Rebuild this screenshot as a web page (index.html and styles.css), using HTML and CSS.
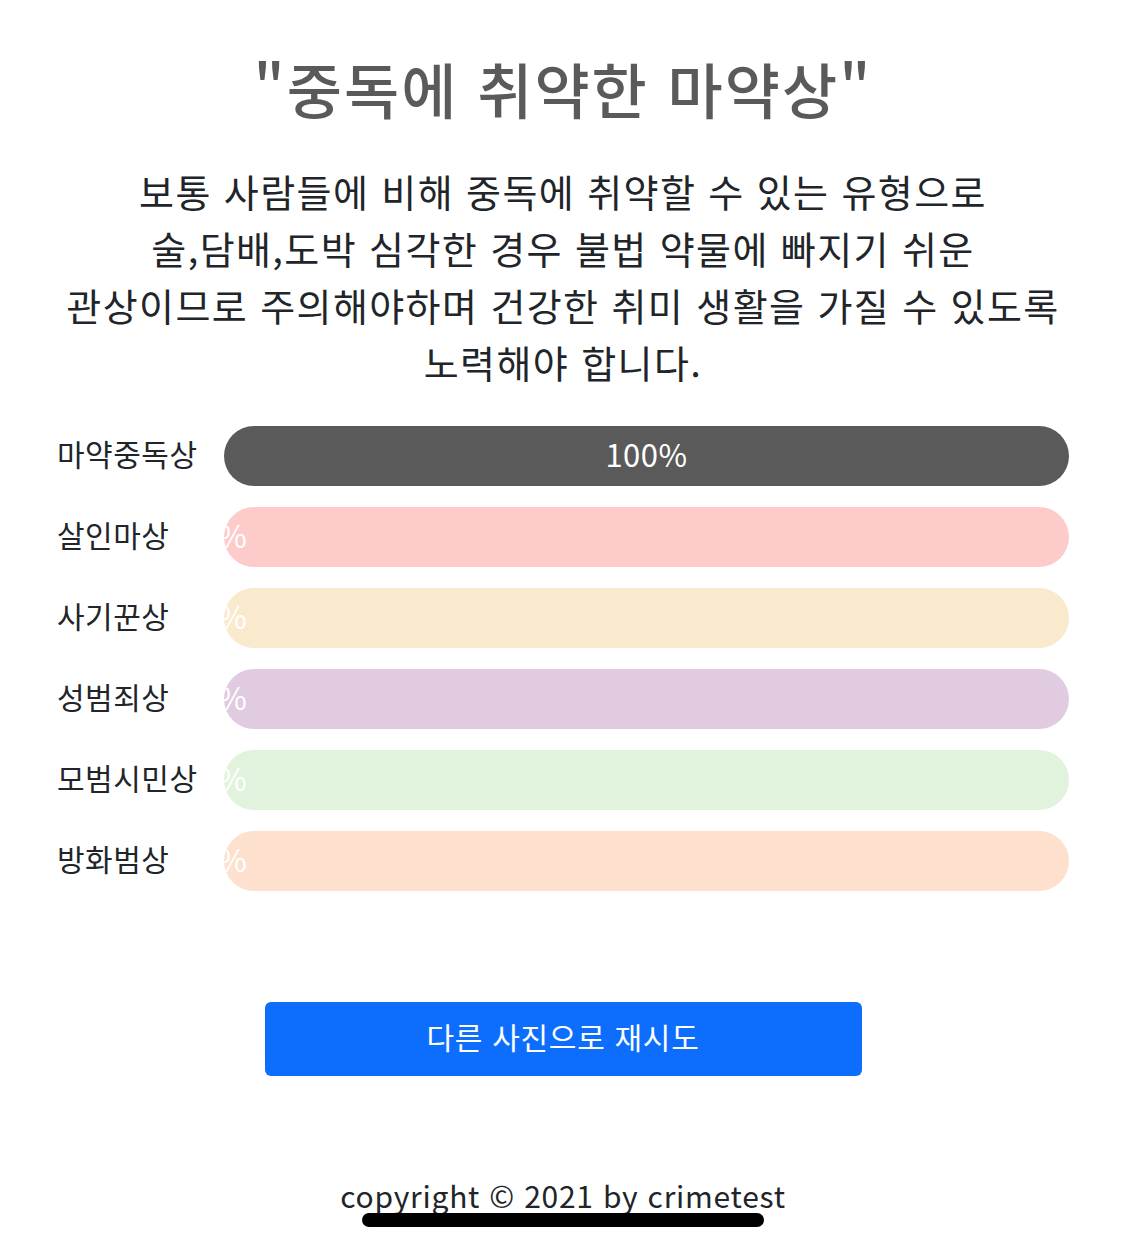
FILE: index.html
```html
<!DOCTYPE html>
<html lang="ko">
<head>
<meta charset="utf-8">
<title>결과</title>
<link rel="stylesheet" href="styles.css">
</head>
<body>
<main class="page">
  <h1 class="title">"중독에 취약한 마약상"</h1>
  <p class="desc">보통 사람들에 비해 중독에 취약할 수 있는 유형으로<br>술,담배,도박 심각한 경우 불법 약물에 빠지기 쉬운<br>관상이므로 주의해야하며 건강한 취미 생활을 가질 수 있도록<br>노력해야 합니다.</p>

  <section class="results">
    <div class="row">
      <span class="label">마약중독상</span>
      <div class="bar bar-dark"><div class="fill" style="width:100%"><span>100%</span></div></div>
    </div>
    <div class="row">
      <span class="label">살인마상</span>
      <div class="bar bar-pink"><div class="fill" style="width:0%"><span>0%</span></div></div>
    </div>
    <div class="row">
      <span class="label">사기꾼상</span>
      <div class="bar bar-yellow"><div class="fill" style="width:0%"><span>0%</span></div></div>
    </div>
    <div class="row">
      <span class="label">성범죄상</span>
      <div class="bar bar-purple"><div class="fill" style="width:0%"><span>0%</span></div></div>
    </div>
    <div class="row">
      <span class="label">모범시민상</span>
      <div class="bar bar-green"><div class="fill" style="width:0%"><span>0%</span></div></div>
    </div>
    <div class="row">
      <span class="label">방화범상</span>
      <div class="bar bar-peach"><div class="fill" style="width:0%"><span>0%</span></div></div>
    </div>
  </section>

  <div class="actions">
    <button class="retry" type="button">다른 사진으로 재시도</button>
  </div>

  <footer class="footer">copyright © 2021 by crimetest</footer>
</main>
<div class="home-indicator"></div>
</body>
</html>
```

FILE: styles.css
```css
html, body {
  margin: 0;
  padding: 0;
  background: #ffffff;
}

body {
  font-family: "Noto Sans CJK KR", "Noto Sans", sans-serif;
  color: #212529;
  width: 1125px;
  height: 1251px;
  overflow: hidden;
  position: relative;
}

.page {
  display: flex;
  flex-direction: column;
  align-items: center;
  padding: 52px 56px 0 57px;
}

.title {
  margin: 0;
  font-size: 60px;
  line-height: 72px;
  font-weight: 500;
  color: #5a5a5a;
  letter-spacing: 2px;
  text-align: center;
}

.desc {
  margin: 38px 0 0;
  font-size: 38px;
  line-height: 57px;
  font-weight: 400;
  text-align: center;
  letter-spacing: 1.4px;
  color: #212529;
}

.results {
  align-self: stretch;
  margin-top: 36px;
  display: flex;
  flex-direction: column;
  gap: 21px;
}

.row {
  display: grid;
  grid-template-columns: 167px 1fr;
  align-items: center;
}

.label {
  font-size: 30px;
  letter-spacing: 0.5px;
  line-height: 40px;
  padding-bottom: 7px;
  color: #212529;
}

.bar {
  height: 60px;
  border-radius: 30px;
  overflow: hidden;
  display: flex;
}

.fill {
  display: flex;
  align-items: center;
  justify-content: center;
  white-space: nowrap;
  color: #ffffff;
  font-size: 31px;
  letter-spacing: 0.5px;
  height: 100%;
  padding-bottom: 6px;
  box-sizing: border-box;
}

.bar-dark { background: #5a5a5a; }
.bar-dark .fill { background: #5a5a5a; }
.bar-pink { background: #fecbcb; }
.bar-yellow { background: #f9e9cd; }
.bar-purple { background: #e1cbe1; }
.bar-green { background: #e2f3dd; }
.bar-peach { background: #fde0cd; }

.actions {
  margin-top: 111px;
  display: flex;
  justify-content: center;
}

.retry {
  width: 597px;
  height: 74px;
  padding: 0 0 6px;
  border: none;
  border-radius: 6px;
  background: #0d6efd;
  color: #ffffff;
  font-family: "Noto Sans CJK KR", "Noto Sans", sans-serif;
  font-size: 30px;
  letter-spacing: 0.7px;
  cursor: pointer;
}

.footer {
  margin-top: 99px;
  font-size: 30px;
  line-height: 40px;
  letter-spacing: 0.75px;
  color: #212529;
  text-align: center;
}

.home-indicator {
  position: absolute;
  left: 362px;
  bottom: 24px;
  width: 402px;
  height: 14px;
  border-radius: 7px;
  background: #000000;
}
```
